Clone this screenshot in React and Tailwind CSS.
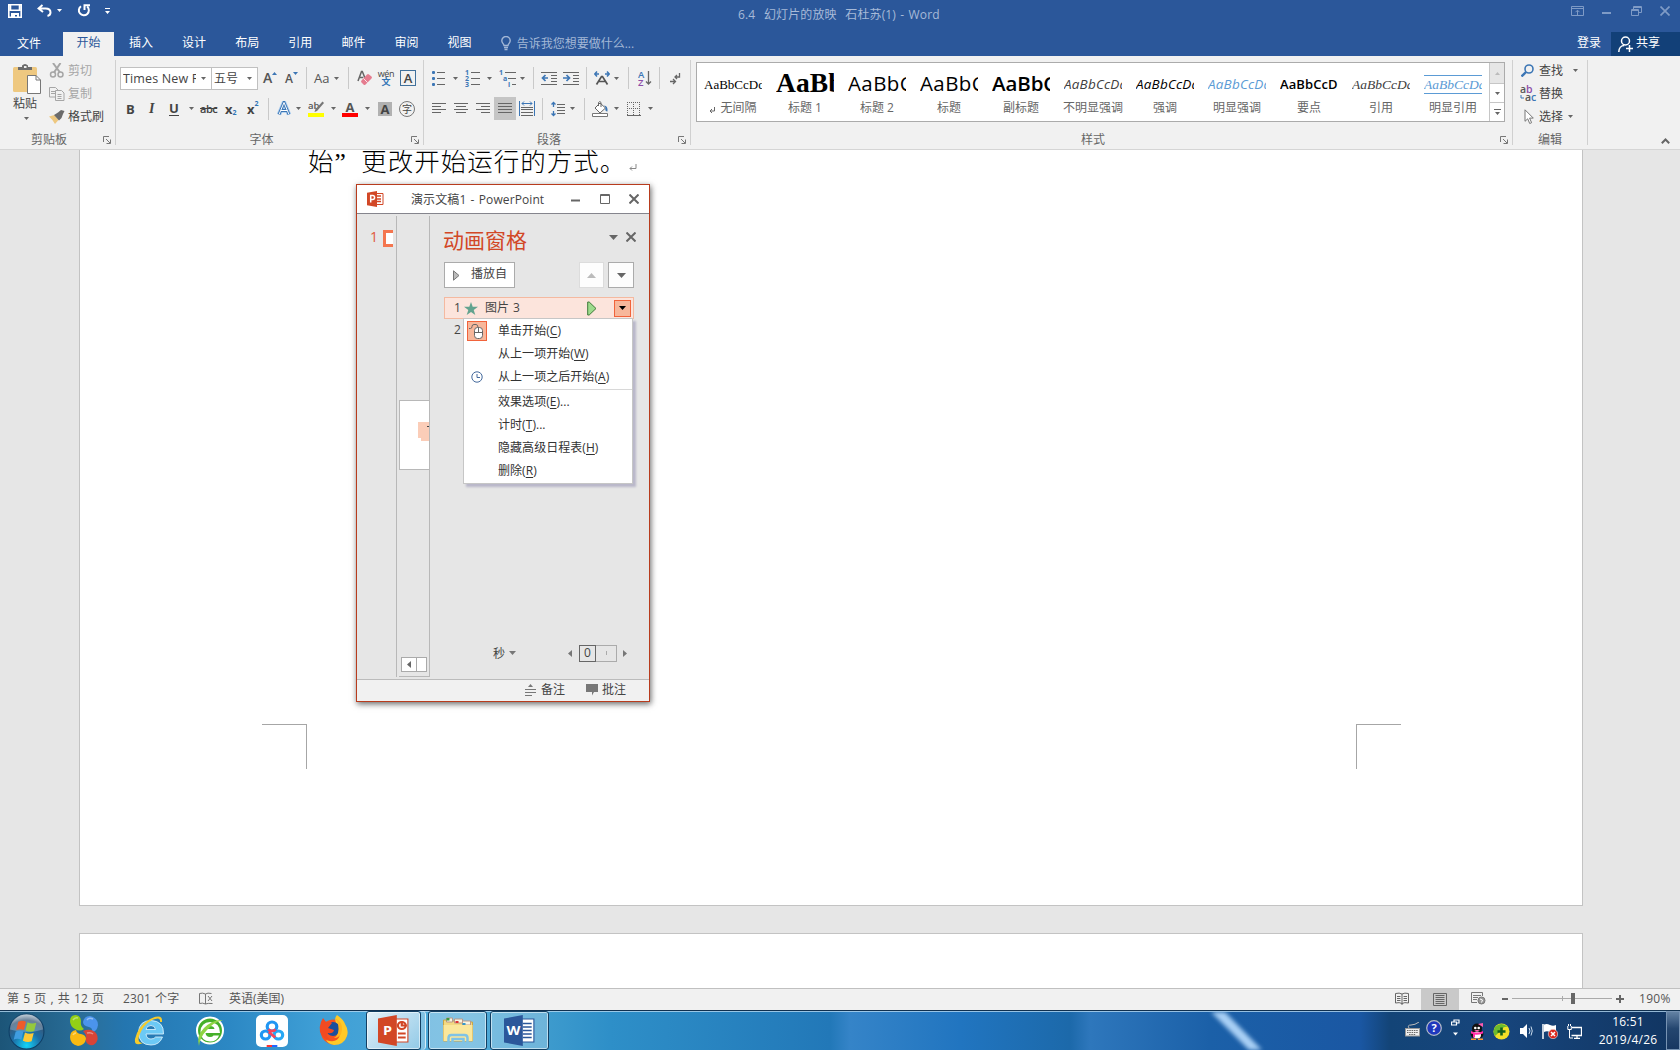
import React from "react";

const Caret = ({ className = "fill-[#666]" }) => (
  <svg width="5" height="3" viewBox="0 0 5 3" className={className}><path d="M0 0h5L2.5 3z" /></svg>
);
const CaretCell = ({ className }) => (
  <span className={"flex shrink-0 items-center " + className}><Caret /></span>
);
const Sep = ({ className }) => (
  <span className={"flex shrink-0 " + className}><i className="h-[22px] w-px bg-[#c9c9c9]" /></span>
);
const Cell = ({ className = "", children }) => (
  <span className={"flex shrink-0 items-center " + className}>{children}</span>
);
const Launcher = () => (
  <svg width="8" height="8" viewBox="0 0 8 8" fill="none" stroke="#777"><path d="M.5 6V.5H6M3 3l4 4M7.5 3.5v4h-4" /></svg>
);

const Group = ({ className, label, labelClass = "", launcher, children }) => (
  <div className={"flex h-full shrink-0 pt-1 pb-[4px] " + className}>
    <div className="flex min-w-0 flex-1 flex-col">
      <div className="h-[70px]">{children}</div>
      <div className="flex h-[17px] items-center">
        <span className={"flex-1 pt-[6px] text-center text-[#666] " + labelClass}>{label}</span>
        {launcher && <span className="mt-[7px] mr-[4px]"><Launcher /></span>}
      </div>
    </div>
    <div className="w-px bg-[#d0d0d0]" />
  </div>
);

/* ---------- title bar and tabs ---------- */

function TitleBar() {
  return (
    <div className="flex h-8 shrink-0 text-white">
      <div className="flex w-[130px] items-start pt-1 pl-2">
        <svg width="14" height="14" viewBox="0 0 14 14" className="mr-[15px] shrink-0"><path fill="none" stroke="#fff" strokeWidth="1.6" d="M.8.8h12.4v12.4H.8zM2.5 1v5.3h9V1" /><path fill="#fff" d="M3 9h8v5H9v-3H7v3H3z" /></svg>
        <svg width="15" height="13" viewBox="0 0 15 13" className="shrink-0"><path fill="none" stroke="#fff" strokeWidth="2" d="M5.5 1 1.5 4.5 6 8M2 4.5h6.5c3 0 5 1.6 5 4 0 1.6-1 3-3 3.5" /></svg>
        <span className="mt-[5px] ml-[5px]"><Caret className="fill-white" /></span>
        <svg width="14" height="13" viewBox="0 0 14 13" className="ml-[15px] shrink-0"><path fill="none" stroke="#fff" strokeWidth="2" d="M4 2.2a5 5 0 1 0 6.2.4M7.5 6V1.2H13" /></svg>
        <svg width="5" height="7" viewBox="0 0 5 7" className="mt-[4px] ml-[14px] shrink-0" fill="#fff"><path d="M0 0h5v1H0zM0 3h5L2.5 6z" /></svg>
      </div>
      <div className="flex-1 pt-[6px] pl-[608px] leading-[18px] tracking-[.12px] [word-spacing:1.1px] whitespace-pre text-[#a7bad8]">6.4  幻灯片的放映  石杜苏(1) - Word</div>
      <div className="flex w-[109px] items-start pt-1.5 text-[#7f9bc6]">
        <svg width="13" height="10" viewBox="0 0 13 10" className="mr-[18px]" fill="none" stroke="currentColor"><path d="M.5.5h12v9H.5zM.5 2.5h12M6.5 9V4.5M4.5 6.2l2-2 2 2" /></svg>
        <svg width="10" height="10" viewBox="0 0 10 10" className="mr-[19px]" fill="currentColor"><path d="M0 6h9v2H0z" /></svg>
        <svg width="11" height="10" viewBox="0 0 11 10" className="mr-[18px]" fill="none" stroke="currentColor"><path d="M.5 3.5h7v6h-7zM.5 4.5h7M2.5 3.500V.5h8v6h-3M2.500 1.500h8" /></svg>
        <svg width="10" height="10" viewBox="0 0 10 10" fill="none" stroke="currentColor" strokeWidth="1.7"><path d="m.5.5 9 9m0-9-9 9" /></svg>
      </div>
    </div>
  );
}

function Tabs() {
  const tabs = ["插入", "设计", "布局", "引用", "邮件", "审阅", "视图"];
  return (
    <div className="flex h-6 shrink-0 text-white">
      <div className="w-[63px] pl-[17px] leading-[23px]">文件</div>
      <div className="w-[51px] bg-[#f1f1f1] text-center leading-[22px] text-[#2b579a]">开始</div>
      <div className="flex pl-[15px] leading-[22px]">
        {tabs.map((t) => <span key={t} className="w-[53.100px]">{t}</span>)}
      </div>
      <div className="flex flex-1 text-[#a3b7d6]">
        <svg width="10" height="15" viewBox="0 0 10 15" className="mt-1 mr-[6px]" fill="none" stroke="currentColor" strokeWidth="1.400"><path d="M3 9.500C3 8 .8 7 .8 4.700A4.100 4.100 0 0 1 9.200 4.700C9.200 7 7 8 7 9.500zM3 11.500h4M3.500 13.500h3" /></svg>
        <span className="leading-[24px]">告诉我您想要做什么...</span>
      </div>
      <span className="w-[34px] leading-[22px]">登录</span>
      <div className="flex w-[69px] bg-[#124078] pl-[7px]">
        <svg width="16" height="17" viewBox="0 0 16 17" className="mt-[4px] mr-[2px]" fill="none" stroke="#fff" strokeWidth="1.500"><circle cx="7.500" cy="5" r="4" /><path d="M.8 16c0-4 2.500-6.500 5.500-6.500M8 12.500h7M11.500 9v7" /></svg>
        <span className="leading-[22px]">共享</span>
      </div>
    </div>
  );
}

/* ---------- ribbon ---------- */

function Clipboard() {
  return (
    <Group className="w-[116px]" label="剪贴板" labelClass="-ml-[5px]" launcher>
      <div className="flex">
        <div className="w-[49px] pt-[4px] pl-[13px]">
          <svg width="29" height="30" viewBox="0 0 29 30"><rect y="3" width="24" height="25" rx="1.500" fill="#eec880" /><path d="M5 6V3h4V1.500Q12 -1.500 15 1.500V3h4v3z" fill="#6b6b6b" /><rect x="11" y="2" width="2.500" height="2" fill="#eee" /><path d="M14.500 11.500h8.500l4.500 4.500v13.500h-13z" fill="#fff" stroke="#777" /><path d="M23 11.500v4.500h4.500" fill="none" stroke="#777" /></svg>
          <div className="mt-[2px] leading-4 text-[#444]">粘贴</div>
          <div className="mt-[5px] flex pl-[11px]"><Caret /></div>
        </div>
        <div className="-mt-px flex flex-col text-[#a6a6a6]">
          <div className="flex h-[23px] items-center">
            <svg width="16" height="15" viewBox="0 0 16 15" className="mr-[3px]" fill="none" stroke="#a6a6a6" strokeWidth="1.500"><path d="M4 0l7 9.500M11.500 0 5 9.500" strokeWidth="2" /><circle cx="4" cy="11.500" r="2.500" /><circle cx="11.500" cy="11.500" r="2.500" /></svg>剪切</div>
          <div className="flex h-[23px] items-center">
            <svg width="16" height="14" viewBox="0 0 16 14" className="mr-[3px]" fill="#f1f1f1" stroke="#a6a6a6"><path d="M.5.500h6l2.500 2.500v7h-8.500zM2 4.500h4M2 6.500h4" /><path d="M6.500 3.500h6l2.500 2.500v7.500h-8.500zM8.500 7.500h4M8.500 9.500h4M8.500 11.500h4" /></svg>复制</div>
          <div className="flex h-[23px] items-center text-[#444]">
            <svg width="16" height="14" viewBox="0 0 16 14" className="mr-[3px]"><path d="M0 6.500 5.500 5l4 5-3.500 4Q3.500 9.500 0 6.500z" fill="#eec880" /><path d="m5 5 4-2.500L12 0l3.500 1-1.500 3-1.500 4-2.500 2.500z" fill="#6b6b6b" /></svg>格式刷</div>
        </div>
      </div>
    </Group>
  );
}

const Combo = ({ className, children }) => (
  <div className={"flex h-[23px] shrink-0 items-center justify-between border border-[#c0c0c0] bg-white pr-[5px] text-[#444] " + className}>{children}<Caret /></div>
);

function FontGroup() {
  return (
    <Group className="w-[308px] pl-[4px]" label="字体" labelClass="-ml-[8px]" launcher>
      <div className="flex h-[36px] items-center text-[#555]">
        <Combo className="w-[92px] pl-[2px]"><span className="w-[73px] overflow-hidden pt-px text-[12.500px] tracking-[.15px] whitespace-nowrap">Times New Roman</span></Combo>
        <Combo className="-ml-px w-[47px] pl-[2px]"><span className="pt-px">五号</span></Combo>
        <Cell className="ml-[5px] w-[22px]"><b className="text-[14px] font-semibold">A</b><svg width="5" height="3" viewBox="0 0 5 3" className="mb-[10px]"><path fill="#3c76b5" d="M0 3h5L2.500 0z" /></svg></Cell>
        <Cell className="w-[21px] pt-[2px]"><b className="text-[12px] font-semibold">A</b><svg width="5" height="3" viewBox="0 0 5 3" className="mb-[11px]"><path fill="#3c76b5" d="M0 0h5L2.500 3z" /></svg></Cell>
        <Sep className="w-[8px]" />
        <Cell className="w-[20px] text-[13px]">Aa</Cell>
        <CaretCell className="w-[14px]" />
        <Sep className="w-[9px]" />
        <Cell className="w-[22px]"><svg width="16" height="16" viewBox="0 0 16 16"><path d="m1 11 3.500-9.500h.8L8 8M2.300 7.500h4" stroke="#666" strokeWidth="1.500" fill="none" /><path d="M4.500 10.500 10 4.500q1-1 2 0l2.500 2q1 1 0 2l-6 6q-1 1-2 0l-2-2q-1-1 0-2z" fill="#e57c8f" /><path d="m6.500 8.500 4 4" stroke="#fff" strokeWidth=".8" /></svg></Cell>
        <Cell className="w-[21px]"><span className="-ml-px flex w-[16px] flex-col items-center"><span className="text-[9px] leading-[7px] tracking-[-.3px] text-[#444]">wén</span><span className="text-[9px] leading-[10px] font-bold text-[#2f74b5]">文</span></span></Cell>
        <span className="flex size-[16px] items-center justify-center border border-[#41719c] text-[13px] font-semibold text-[#444]">A</span>
      </div>
      <div className="flex h-[25px] items-center text-[#444]">
        <Cell className="ml-[6px] w-[22px] text-[13px] font-bold">B</Cell>
        <Cell className="w-[21px] pl-[1px] text-[14px] font-bold italic"><span className="font-['Liberation_Serif']">I</span></Cell>
        <Cell className="w-[20px] text-[13px]"><b className="border-b border-[#444] leading-[13px]">U</b></Cell>
        <CaretCell className="w-[11px]" />
        <Cell className="w-[25px] text-[11px] font-semibold line-through tracking-[-.5px]">abc</Cell>
        <Cell className="w-[22px] text-[13px] font-bold">x<span className="mt-[8px] text-[7px] text-[#2f74b5]">2</span></Cell>
        <Cell className="w-[21px] text-[13px] font-bold">x<span className="mb-[9px] text-[7px] text-[#2f74b5]">2</span></Cell>
        <Sep className="w-[9px]" />
        <Cell className="w-[19px]"><svg width="15" height="15" viewBox="0 0 15 15"><path d="M2 13.500 7 1.500l5 12M4 9.500h6" stroke="#a8cbee" strokeWidth="4.500" fill="none" /><path d="M2 13.500 7 1.500l5 12M4 9.500h6" stroke="#3c76b5" strokeWidth="2.800" fill="none" /><path d="M2 13.500 7 1.500l5 12M4 9.500h6" stroke="#fff" strokeWidth="1" fill="none" /></svg></Cell>
        <CaretCell className="w-[12px]" />
        <Cell className="w-[23px]"><svg width="17" height="16" viewBox="0 0 17 16"><text x="0" y="8" fontSize="9.500" fontWeight="600" fontFamily="Open Sans, sans-serif" fill="#555">ab</text><path d="m16 2-7 8-2.500 1 .8-2.500L14.500.500z" fill="#777" /><path fill="#ff0" d="M0 12h16v4H0z" /></svg></Cell>
        <CaretCell className="w-[11px]" />
        <Cell className="w-[23px]"><span className="flex w-4 flex-col items-center border-b-4 border-[red] text-[13px] leading-[12px] font-bold text-[#555]">A</span></Cell>
        <CaretCell className="w-[13px]" />
        <Cell className="w-[21px]"><span className="flex h-[14px] w-[14px] items-center justify-center bg-[#b1b1b1] text-[13px] font-bold">A</span></Cell>
        <span className="flex size-[16px] items-center justify-center rounded-full border border-[#777] text-[10px] leading-none">字</span>
      </div>
    </Group>
  );
}

const Lines = ({ d, w = 14 }) => (
  <svg width={w} height="15" viewBox={`0 0 ${w} 15`} stroke="#666" fill="none"><path d={d} /></svg>
);

function Paragraph() {
  return (
    <Group className="w-[267px] pl-[8px]" label="段落" labelClass="-ml-[12px]" launcher>
      <div className="flex h-[36px] items-center">
        <Cell className="w-[21px]"><svg width="14" height="16" viewBox="0 0 14 16"><path d="M5 2.500h8M5 8.500h8M5 14.500h8" stroke="#666" /><g fill="#3c76b5"><rect y="1" width="3" height="3" rx="1" /><rect y="7" width="3" height="3" rx="1" /><rect y="13" width="3" height="3" rx="1" /></g></svg></Cell>
        <CaretCell className="w-[12px]" />
        <Cell className="w-[22px]"><svg width="16" height="18" viewBox="0 0 16 18"><path d="M6 3.500h9M6 9.500h9M6 15.500h9" stroke="#666" /><g fill="#3c76b5" fontSize="7" fontWeight="bold" fontFamily="Open Sans, sans-serif"><text y="5.500">1</text><text y="11.500">2</text><text y="17.500">3</text></g></svg></Cell>
        <CaretCell className="w-[12px]" />
        <Cell className="w-[21px]"><svg width="17" height="18" viewBox="0 0 17 18"><path d="M6 3.500h11M9 9.500h8M13 15.500h4" stroke="#666" /><g fill="#3c76b5" fontSize="7" fontWeight="bold" fontFamily="Open Sans, sans-serif"><text y="5.500">1</text><text x="4" y="11.500">a</text><text x="9" y="17.500">i</text></g></svg></Cell>
        <CaretCell className="w-[13px]" />
        <Sep className="w-[8px]" />
        <Cell className="w-[22px]"><svg width="16" height="14" viewBox="0 0 16 14"><path d="M0 1.500h16M10 4.500h6M10 7.500h6M10 10.500h6M0 13.500h16" stroke="#666" /><path d="M7 7H2M4.500 4 1.500 7l3 3" stroke="#3c76b5" strokeWidth="1.700" fill="none" /></svg></Cell>
        <Cell className="w-[23px]"><svg width="16" height="14" viewBox="0 0 16 14"><path d="M0 1.500h16M10 4.500h6M10 7.500h6M10 10.500h6M0 13.500h16" stroke="#666" /><path d="M0 7h5.500M3.500 4l3 3-3 3" stroke="#3c76b5" strokeWidth="1.700" fill="none" /></svg></Cell>
        <Sep className="w-[8px]" />
        <Cell className="w-[20px]"><svg width="16" height="14" viewBox="0 0 16 14"><path d="m2.500 13.500 5-8h1l5 8M4.500 10.500h7" stroke="#555" strokeWidth="1.700" fill="none" /><path d="M3 .5.800 3 3 5.500M1 3h4M13 .5 15.200 3 13 5.500M15 3h-4" stroke="#3c76b5" strokeWidth="1.500" fill="none" /></svg></Cell>
        <CaretCell className="w-[14px]" />
        <Sep className="w-[10px]" />
        <Cell className="w-[21px]"><svg width="15" height="17" viewBox="0 0 15 17"><g fontSize="9.500" fontWeight="600" fontFamily="Open Sans, sans-serif"><text y="8" fill="#3c76b5">A</text><text y="16" fill="#8c4ea8">Z</text></g><path d="M10.500 1v13M8 11.500l2.500 2.500 2.500-2.500" stroke="#666" strokeWidth="1.300" fill="none" /></svg></Cell>
        <Sep className="w-[11px]" />
        <svg width="11" height="13" viewBox="0 0 11 13" fill="none" stroke="#666" strokeWidth="1.300"><path d="M9.500 1v4H5M7 3 5 5l2 2M0 9.500h5M3 7l2.500 2.500L3 12" /></svg>
      </div>
      <div className="flex h-[25px] items-center">
        <Cell className="w-[22px]"><Lines d="M0 2.500h14M0 5.500h9M0 8.500h14M0 11.500h9" /></Cell>
        <Cell className="w-[22px]"><Lines d="M0 2.500h14M2 5.500h10M0 8.500h14M2 11.500h10" /></Cell>
        <Cell className="w-[18px]"><Lines d="M0 2.500h14M5 5.500h9M0 8.500h14M5 11.500h9" /></Cell>
        <Cell className="h-[23px] w-[22px] justify-center bg-[#c5c5c5]"><Lines d="M0 2.500h14M0 5.500h14M0 8.500h14M0 11.500h14" /></Cell>
        <Cell className="w-[26px] pl-[3px]"><svg width="16" height="15" viewBox="0 0 16 15" fill="none"><path d="M2 6.500h12M2 8.500h12M2 11.500h12M2 14.500h12" stroke="#666" /><path d="M.5 0v15M15.500 0v15M3 2.500h10M5 .500 3 2.500l2 2M11 .500l2 2-2 2" stroke="#3c76b5" /></svg></Cell>
        <Sep className="w-[9px]" />
        <Cell className="w-[19px]"><svg width="15" height="16" viewBox="0 0 15 16" fill="none"><path d="M6 3.500h8M6 6.500h8M6 9.500h8M6 12.500h8" stroke="#666" /><path d="M2.500 1v5M.500 3.500l2-2 2 2M2.500 10v5M.500 12.500l2 2 2-2" stroke="#3c76b5" strokeWidth="1.300" /></svg></Cell>
        <CaretCell className="w-[14px]" />
        <Sep className="w-[8px]" />
        <Cell className="w-[22px]"><svg width="17" height="16" viewBox="0 0 17 16"><path d="m3 7 5-5 5.500 5-5.500 5zM6.500 5V1.500q1.500-2 2.500 0V6" fill="#fff" stroke="#666" /><path d="M12 4.500q4 0 3.500 6-3 0-2-4z" fill="#3c76b5" /><path d="M.500 12.500h15v3H.500z" fill="#fff" stroke="#777" /></svg></Cell>
        <CaretCell className="w-[13px]" />
        <Cell className="w-[21px]"><svg width="14" height="14" viewBox="0 0 14 14" fill="none" stroke="#666"><path strokeDasharray="1 1" d="M.5 0v13M6.500 0v13M12.500 0v13M0 .500h13M0 6.500h13" /><path d="M0 13.500h14" /></svg></Cell>
        <CaretCell className="w-[5px]" />
      </div>
    </Group>
  );
}

const STYLES = [
  ["无间隔", "AaBbCcDd", "font-['Liberation_Serif'] text-[13px] text-black"],
  ["标题 1", "AaBb", "font-['Liberation_Serif'] text-[27.5px] tracking-[.1px] font-bold text-black"],
  ["标题 2", "AaBbC", "text-[20.5px] tracking-[.4px] text-black"],
  ["标题", "AaBbC", "text-[20.5px] tracking-[.4px] text-black"],
  ["副标题", "AaBbC", "text-[20.5px] tracking-[-.1px] font-semibold text-black"],
  ["不明显强调", "AaBbCcDd", "text-[13.5px] tracking-[.2px] italic text-[#404040]"],
  ["强调", "AaBbCcDd", "text-[13.5px] tracking-[.2px] italic text-black"],
  ["明显强调", "AaBbCcDd", "text-[13.5px] tracking-[.2px] italic text-[#5b9bd5]"],
  ["要点", "AaBbCcDd", "text-[13px] tracking-[.1px] font-semibold text-black"],
  ["引用", "AaBbCcDd", "font-['Liberation_Serif'] text-[13.500px] italic text-[#404040]"],
  ["明显引用", "AaBbCcDd", "font-['Liberation_Serif'] text-[13.500px] italic text-[#5b9bd5]"],
];

function Styles() {
  return (
    <Group className="w-[822px] pl-[5px]" label="样式" labelClass="-ml-[10px]" launcher>
      <div className="mt-[2px] flex h-[60px] w-[809px] border border-[#ababab] bg-white">
        {STYLES.map(([name, sample, cls], i) => (
          <div key={name} className="flex w-[72px] shrink-0 flex-col px-[7px]">
            <div className={"flex items-center overflow-hidden " + (i === 10 ? "mt-[12px] mb-[8px] h-[19px] border-y border-[#5b9bd5]" : "mt-[8px] mb-[8px] h-[23px]" + (i === 1 ? "" : i > 1 && i < 5 ? " pt-[2px]" : " pt-[3px]"))}>
              <span className={"block leading-[19px] whitespace-nowrap " + cls}>{sample}</span>
            </div>
            <div className="-mx-[7px] flex items-center justify-center leading-[12px] whitespace-nowrap text-[#666]">
              {i === 0 && <svg width="6" height="6" viewBox="0 0 6 6" className="mt-1 mr-[5px]" fill="none" stroke="#666"><path d="M5.500 0v4H1M3 2 1 4l2 2" /></svg>}
              {name}
            </div>
          </div>
        ))}
        <div className="flex w-[15px] flex-col border-l border-[#c6c6c6]">
          <span className="flex h-[21px] items-center justify-center border-b border-[#c6c6c6] bg-[#e6e6e6]"><svg width="5" height="3" viewBox="0 0 5 3"><path fill="#bbb" d="M0 3h5L2.500 0z" /></svg></span>
          <span className="flex h-[19px] items-center justify-center border-b border-[#c6c6c6]"><Caret /></span>
          <span className="flex flex-1 items-center justify-center"><svg width="7" height="6" viewBox="0 0 7 6" fill="#666"><path d="M0 0h7v1H0zM1 3h5L3.500 6z" /></svg></span>
        </div>
      </div>
    </Group>
  );
}

function Editing() {
  return (
    <Group className="w-[75px] pl-[8px]" label="编辑" labelClass="-ml-[8px]">
      <div className="-mt-px flex h-[23px] items-center text-[#444]">
        <svg width="13" height="13" viewBox="0 0 13 13" className="mr-[5px]" fill="none" stroke="#3c76b5"><circle cx="8" cy="5" r="4" strokeWidth="1.600" /><path d="m5 8-4.500 4.500" strokeWidth="2.400" /></svg>查找<span className="ml-[10px]"><Caret /></span>
      </div>
      <div className="flex h-[23px] items-center text-[#444]">
        <svg width="17" height="17" viewBox="0 0 17 17" className="-ml-px mr-[2px]" fontSize="10.500" fontWeight="600" fontFamily="Open Sans, sans-serif"><text y="8" fill="#555">a<tspan fill="#8c4ea8">b</tspan></text><text x="5" y="16" fill="#555">a<tspan fill="#3c76b5">c</tspan></text><path d="M1 10v3h3" stroke="#3c76b5" fill="none" /></svg>替换
      </div>
      <div className="flex h-[23px] items-center text-[#444]">
        <svg width="10" height="16" viewBox="0 0 10 16" className="mr-[5px] ml-[3px]" fill="#fff" stroke="#777"><path d="M1 .800v11.500l2.700-2.500 2 4.700 1.900-.8-2-4.600h3.700z" /></svg>选择<span className="ml-[5px]"><Caret /></span>
      </div>
    </Group>
  );
}

/* ---------- embedded PowerPoint window ---------- */

const MENU = [
  ["单击开始", "C", ""], ["从上一项开始", "W", ""], ["从上一项之后开始", "A", ""], null,
  ["效果选项", "E", "..."], ["计时", "T", "..."], ["隐藏高级日程表", "H", ""], ["删除", "R", ""],
];

function Menu() {
  return (
    <div className="absolute top-[20px] left-[18px] z-10 h-[166px] w-[170px] border border-[#c6c6c6] bg-white text-[#333] shadow-[3px_3px_2px_rgba(120,115,160,.4)]">
      {MENU.map((m, i) => m ? (
        <div key={i} className="flex h-[23px] items-center whitespace-nowrap">
          <span className="flex w-[34px] shrink-0 pl-[3px]">
            {i === 0 && <svg width="20" height="20" viewBox="0 0 20 20" className="mt-px"><rect x=".5" y=".500" width="19" height="19" fill="#f7b79b" stroke="#f1633b" /><path d="M2 7.500h1.500Q5 7.500 5 5.500t2-2h2q2 0 2 3" stroke="#666" fill="none" /><rect x="7.500" y="6.500" width="8" height="11" rx="3" fill="#fff" stroke="#666" /><path d="M7.500 11.500h8M11.500 6.500v5" stroke="#666" /></svg>}
            {i === 2 && <svg width="12" height="12" viewBox="0 0 12 12" className="ml-[4px]" fill="none" stroke="#44699c"><circle cx="6" cy="6" r="5.200" /><path d="M6 3v3.500h3" /></svg>}
          </span>
          <span className="tracking-[.05px]">{m[0]}(<u className="underline-offset-2">{m[1]}</u>){m[2]}</span>
        </div>
      ) : <div key={i} className="mt-px ml-[34px] h-px bg-[#d8d8d8]" />)}
    </div>
  );
}

function PowerPointWindow() {
  return (
    <div className="mt-[8px] ml-[276px] flex h-[518px] w-[294px] flex-col border border-[#b83b1d] bg-[#e6e6e6] text-[#444] shadow-[1px_2px_6px_rgba(0,0,0,.6)]">
      <div className="flex h-[29px] shrink-0 items-center border-b border-[#85858d] bg-white pl-[10px]">
        <svg width="17" height="16" viewBox="0 0 17 16"><path d="M8 2.500h8v11H8z" fill="#fff" stroke="#d24726" /><path d="M10 5h4M10 8h4M10 10.500h4" stroke="#d24726" strokeWidth="1.500" /><path d="M0 1.700 10 0v16L0 14.300z" fill="#d24726" /><path d="M3.700 11.500v-7h2c2.500 0 2.500 4 0 4h-2" stroke="#fff" strokeWidth="1.500" fill="none" /></svg>
        <span className="ml-[27px] w-[160px] pt-px tracking-[.1px] [word-spacing:1px]">演示文稿1 - PowerPoint</span>
        <svg width="9" height="10" viewBox="0 0 9 10" fill="#666"><path d="M0 5.500h9v2H0z" /></svg>
        <svg width="10" height="10" viewBox="0 0 10 10" className="ml-[20px]" stroke="#666" fill="none"><path d="M.5.500h9v9h-9zM0 1.500h10" /></svg>
        <svg width="10" height="10" viewBox="0 0 10 10" className="ml-[19px]" stroke="#666" strokeWidth="2" fill="none"><path d="m.5.500 9 9m0-9-9 9" /></svg>
      </div>
      <div className="flex h-[465px] shrink-0">
        <div className="mt-[2px] mb-[2px] flex w-[40px] border-r border-[#b8b8b8] pt-[11px] pl-[13px] text-[14px] leading-[20px] text-[#e0583a]">
          <span className="w-[13px]">1</span>
          <span className="mt-[3px] h-[17px] w-[10px] border-y-[3px] border-l-[3px] border-[#f4764f] bg-white" />
        </div>
        <div className="mt-[2px] mb-[2px] flex w-[33px] shrink-0 flex-col items-end border-r border-[#b8b8b8]">
          <div className="mt-[184px] flex h-[70px] w-[30px] items-start justify-end border border-r-0 border-[#b8b8b8] bg-white pt-[21px]">
            <svg width="11" height="19" viewBox="0 0 11 19"><path d="M0 0h11v19H3v-3H0z" fill="#fbcdb8" /><path d="M9 4.500h2" stroke="#444" /></svg>
          </div>
          <div className="mt-auto mr-[2px] mb-[4px] flex h-[15px] w-[26px] border border-[#aaa] bg-white">
            <span className="flex w-[15px] items-center justify-center border-r border-[#aaa]"><svg width="4" height="7" viewBox="0 0 4 7"><path fill="#666" d="M4 0v7L0 3.500z" /></svg></span>
          </div>
          <div className="h-px w-[30px] bg-[#b8b8b8]" />
        </div>
        <div className="flex flex-1 flex-col pl-[14px]">
          <div className="mt-[12px] flex h-[30px] items-center text-[#d24726]">
            <span className="-ml-px w-[166px] pb-px text-[21px] leading-[29px]">动画窗格</span>
            <svg width="9" height="5" viewBox="0 0 9 5" className="mb-[8px]"><path fill="#666" d="M0 0h9L4.500 5z" /></svg>
            <svg width="10" height="10" viewBox="0 0 10 10" className="mb-[8px] ml-[8px]" stroke="#666" strokeWidth="2"><path d="m.5.500 9 9m0-9-9 9" /></svg>
          </div>
          <div className="mt-[6px] flex h-[26px]">
            <div className="flex w-[71px] items-center border border-[#ababab] bg-white pl-[8px]">
              <svg width="7" height="11" viewBox="0 0 7 11"><path d="M.5.800v9.400L6 5.500z" fill="#bbb" stroke="#777" /></svg><span className="mb-[2px] ml-[11px]">播放自</span>
            </div>
            <span className="ml-[64px] flex w-[25px] items-center justify-center border border-[#dcdcdc] bg-[#fdfdfd]"><svg width="9" height="5" viewBox="0 0 9 5"><path fill="#bbb" d="M0 5h9L4.500 0z" /></svg></span>
            <span className="ml-[4px] flex w-[26px] items-center justify-center border border-[#ababab] bg-[#fdfdfd]"><svg width="9" height="5" viewBox="0 0 9 5"><path fill="#666" d="M0 0h9L4.500 5z" /></svg></span>
          </div>
          <div className="relative mt-[9px] flex h-[22px] w-[190px] items-center border border-[#f4b9a0] bg-[#fce4dc]">
            <span className="ml-[9px] w-[10px]">1</span>
            <svg width="14" height="13" viewBox="0 0 14 13"><path fill="#62a38f" d="m7 0 1.700 4.800h5.300L9.700 8l1.600 5L7 10l-4.300 3 1.600-5L0 4.800h5.300z" /></svg>
            <span className="ml-[7px] w-[102px] [word-spacing:1px]">图片 3</span>
            <svg width="10" height="15" viewBox="0 0 10 15"><path d="M.7 1v13h1.500L9 7.500 2.200 1z" fill="#9ddb8c" stroke="#3f7a3a" /></svg>
            <span className="ml-[17px] flex size-[17px] items-center justify-center border border-[#f1633b] bg-[#f7b79b]"><svg width="7" height="4" viewBox="0 0 7 4"><path d="M0 0h7L3.500 4z" /></svg></span>
            <Menu />
          </div>
          <span className="mt-px ml-[10px] leading-[20px]">2</span>
          <div className="mt-auto mb-[17px] flex h-[18px] items-center">
            <span className="ml-[49px] pt-px">秒</span>
            <svg width="7" height="4" viewBox="0 0 7 4" className="ml-[4px]"><path fill="#777" d="M0 0h7L3.500 4z" /></svg>
            <svg width="4" height="7" viewBox="0 0 4 7" className="ml-[52px]"><path fill="#777" d="M4 0v7L0 3.500z" /></svg>
            <span className="ml-[7px] flex h-[17px] w-[17px] items-center justify-center border border-[#666]">0</span>
            <span className="flex h-[17px] w-[21px] items-center justify-center border border-l-0 border-[#ababab]"><i className="h-[4px] w-px bg-[#aaa]" /></span>
            <svg width="4" height="7" viewBox="0 0 4 7" className="ml-[6px]"><path fill="#777" d="M0 0v7l4-3.500z" /></svg>
          </div>
        </div>
      </div>
      <div className="flex flex-1 items-center border-t border-[#bbb] bg-[#f1f1f1] pb-px pl-[168px]">
        <svg width="11" height="12" viewBox="0 0 11 12"><path d="M0 5.500h11M0 8.500h11M0 11.500h7" stroke="#777" /><path d="M3 3h5L5.500 0z" fill="#777" /></svg>
        <span className="ml-[5px]">备注</span>
        <svg width="12" height="12" viewBox="0 0 12 12" className="ml-[21px]"><path fill="#777" d="M0 0h12v8H8l-2 3.500V8H0z" /></svg>
        <span className="ml-[4px]">批注</span>
      </div>
    </div>
  );
}

function Document() {
  return (
    <div className="flex h-[838px] shrink-0 flex-col overflow-hidden bg-[#e6e6e6] pr-[97px] pl-[79px]">
      <div className="flex h-[756px] shrink-0 flex-col border border-t-0 border-[#c3c3c3] bg-white">
        <div className="flex h-[26px] items-center pl-[228px] text-[25.500px] leading-[26px] font-light text-black">
          <span className="-mt-[4px] w-[26.600px]">始</span>
          <span className="w-[26.600px] font-['Liberation_Serif']">”</span>
          <span className="-mt-[4px] tracking-[1px]">更改开始运行的方式。</span>
          <svg width="8" height="7" viewBox="0 0 8 7" className="mt-[8px] ml-[3px]" fill="none" stroke="#888"><path d="M7 0v4.500H1M3 2.500l-2 2 2 2" /></svg>
        </div>
        <PowerPointWindow />
        <div className="mt-[22px] flex justify-between pr-[181px] pl-[182px]">
          <span className="size-[45px] border-t border-r border-[#a6a6a6]" />
          <span className="size-[45px] border-t border-l border-[#a6a6a6]" />
        </div>
      </div>
      <div className="mt-[27px] h-[60px] shrink-0 border border-[#c3c3c3] bg-white" />
    </div>
  );
}

/* ---------- status bar ---------- */

function StatusBar() {
  return (
    <div className="flex h-[22px] shrink-0 items-center border-t border-[#c0c0c0] bg-[#f1f1f1] pb-[2px] pl-[7px] text-[#555]">
      <span className="w-[116px] [word-spacing:1.100px] whitespace-nowrap">第 5 页 , 共 12 页</span>
      <span className="w-[76px] [word-spacing:1px] tracking-[.1px]">2301 个字</span>
      <svg width="15" height="13" viewBox="0 0 15 13" className="mr-[15px]" fill="none" stroke="#777"><path d="M.5 1.500q3-1 6 .500v10q-3-1.500-6-.500zM6.500 2q2-1.500 6-.500M6.500 12q2-1 7-.500M9 4l4 5M13 4 9 9" /></svg>
      <span className="flex-1">英语(美国)</span>
      <svg width="14" height="13" viewBox="0 0 14 13" fill="none" stroke="#666"><path d="M.5 1.500q4-1 6.500.500 2.500-1.500 6.500-.500v9.500q-4-1-6.500.500-2.500-1.500-6.500-.500zM7 2v11M2 4.500h3.500M2 6.500h3.500M2 8.500h3.500M8.500 4.500H12M8.500 6.500H12M8.500 8.500H12" /></svg>
      <span className="-mb-[2px] ml-[12px] flex h-[21px] w-[38px] items-center justify-center bg-[#c9c9c9] pb-px"><svg width="14" height="13" viewBox="0 0 14 13" fill="none" stroke="#666"><path d="M.5.500h13v12H.500zM2.500 2.500h9M2.500 4.500h9M2.500 6.500h9M2.500 8.500h9M2.500 10.500h9" /></svg></span>
      <svg width="15" height="13" viewBox="0 0 15 13" className="ml-[12px]" fill="none" stroke="#777"><path d="M6 10.500H.500V.500h11V4M2 3.500h8M2 5.500h5M2 7.500h4" /><circle cx="10.500" cy="8.500" r="3.500" fill="#999" /><path d="m9 7 2.500 1-1 2.500" stroke="#fff" /></svg>
      <i className="ml-[16px] h-[2px] w-[6px] bg-[#666]" />
      <svg width="100" height="11" viewBox="0 0 100 11" className="ml-[4px]"><path d="M0 5.500h100M50.500 3v5" stroke="#aaa" /><path fill="#666" d="M59 0h4v11h-4z" /></svg>
      <svg width="8" height="8" viewBox="0 0 8 8" className="ml-[4px]" fill="#666"><path d="M3 0h2v3h3v2H5v3H3V5H0V3h3z" /></svg>
      <span className="ml-[15px] w-[41px] tracking-[.3px]">190%</span>
    </div>
  );
}

/* ---------- taskbar ---------- */

function TaskButton({ className, children }) {
  return <div className={"flex h-[39px] shrink-0 items-center justify-center rounded-[3px] border border-[#123f63] shadow-[inset_0_0_0_1px_rgba(255,255,255,.55)] " + className}>{children}</div>;
}

const OfficeIcon = ({ color, letter, children }) => (
  <svg width="31" height="31" viewBox="0 0 28 31" preserveAspectRatio="none" className="mb-px"><path d="M15 4h12v23H15z" fill="#fff" stroke={color} />{children}<path d="M0 3.500 17 0v31L0 27.500z" fill={color} /><text x="8.500" y="20" textAnchor="middle" fontSize="13" fontWeight="bold" fill="#fff" fontFamily="Open Sans, sans-serif">{letter}</text></svg>
);

function Taskbar() {
  return (
    <div className="flex h-[40px] shrink-0 items-center border-t border-[#10304f] bg-[linear-gradient(90deg,#1c5578_0px,#2a709c_90px,#2476b0_125px,#2c88c4_230px,#3f9fd6_320px,#50abd8_470px,#3f9cce_540px,#2e8fc8_610px,#2278b8_830px,#3584c8_850px,#2175c0_960px,#1c69aa_1070px,#2e77bc_1090px,#1b60a8_1210px,#1a57a3_1360px,#134477_1390px,#17457c_1500px,#113561_1680px)] text-white shadow-[inset_0_1px_0_rgba(180,215,240,.8)]">
      <svg width="37" height="37" viewBox="0 0 36 36" className="mt-[1px] ml-[8px] shrink-0"><defs><radialGradient id="orb" cx=".5" cy=".9" r=".9"><stop offset="0" stopColor="#12d4f8" /><stop offset=".45" stopColor="#1c6ea6" /><stop offset=".8" stopColor="#395776" /><stop offset="1" stopColor="#b6c5d2" /></radialGradient></defs><circle cx="18" cy="18" r="17" fill="url(#orb)" stroke="#0e3f66" /><path d="M2 16a16 15 0 0 1 32 0q-16 5-32 0z" fill="#fff" opacity=".25" /><path d="M10 8.500q4-2 7.500 0l-2 8q-4-1.500-7.500 0z" fill="#ee5b2a" /><path d="M19 9q4 2 8.500.500l-2 8q-4 1.500-8.500-.500z" fill="#95c93d" /><path d="M7.500 18q4-1.500 7.500 0l-2 8q-4-2-7.500 0z" fill="#3f9de0" /><path d="M16.500 19q4 2 8.500.500l-2 8q-4 1.500-8.500-.500z" fill="#fcc836" /></svg>
      <svg width="30" height="31" viewBox="0 0 30 31" className="ml-[24px] shrink-0"><path d="M1 6Q1 0 7 0q5 1 5 6-1 5 3 8-4 3-9 0-5-3-5-8z" fill="#93cf16" /><path d="M14 7q1-6 7-6 8 2 8 9-1 7-6 7 1-4-3-5-6-1-6-5z" fill="#4b94ec" /><path d="M1 22q0-6 6-7 1 4 5 4 5 1 5 5-1 6-8 7-8-2-8-9z" fill="#f9b912" /><path d="M14 16q7-3 12 1 4 4 2 9-2 5-7 4-5-2-4-6 1-4-3-8z" fill="#d94436" /><path d="M4 5q2-3 5-2M18 5q2-3 6-1M4 20q1-2 3-2M18 18q4-1 6 1" stroke="#fff" strokeWidth="1.500" opacity=".4" fill="none" /></svg>
      <svg width="32" height="33" viewBox="0 0 32 33" className="ml-[34px] shrink-0"><path d="M30.500 20H13q.5 5 5 5 3.500 0 4.500-2h7q-3 8-11.500 8Q6 31 5.500 18.500 6 6.500 18 6.500 31 7 30.500 20zM13 15.500h9.500q-.5-4-4.500-4-4.500 0-5 4z" fillRule="evenodd" fill="#6cc9f5" stroke="#e3f6ff" strokeWidth=".8" /><path d="M29 8Q30-1 17 5 5 12 2 25q-1 8 8 4-6 0-4-7Q10 11 19 6q9-4 8 2z" fill="#f6cb2c" /></svg>
      <svg width="30" height="32" viewBox="0 0 30 32" className="ml-[30px] shrink-0"><circle cx="15" cy="15.500" r="13" fill="#45b02a" stroke="#fff" strokeWidth="2" /><path d="M25 18H10.500q.5 4 4.500 4 2.500 0 3.500-1.500H24q-2 6-9 6-9-.5-9.500-10Q6 7.500 15 7q10 .5 10 11zM10.500 14h9q-.5-3-4.500-3t-4.500 3z" fillRule="evenodd" fill="#fff" /><path d="M28 5Q18 4 9 13 1 21 4 31q1-9 8-16 7-8 16-10z" fill="#8fd444" /></svg>
      <svg width="32" height="32" viewBox="0 0 30 32" preserveAspectRatio="none" className="ml-[31px] shrink-0"><rect width="30" height="32" rx="5" fill="#fff" /><g fill="none" strokeWidth="3"><circle cx="9" cy="20" r="4" stroke="#2196f3" /><circle cx="21" cy="20" r="4" stroke="#27a8f5" /><circle cx="15" cy="11.500" r="4.500" stroke="#2196f3" /><path d="M11.500 14.500q3.500 3 7 0M12 17l6 5.500" stroke="#f6435a" strokeWidth="2.500" /></g><path d="M10 30h5v2h-5z" fill="#f33" /><path d="M15 30h5v2h-5z" fill="#26f" /></svg>
      <svg width="30" height="31" viewBox="0 0 30 31" className="ml-[31px] shrink-0"><circle cx="14.500" cy="17" r="12.500" fill="#f7531f" /><path d="M18 0q7 5 8 9 4 6 2 12-3 9-13 9-6-1-8-5 11 4 14-5 2-8-4-12Q15 3 18 0z" fill="#ffc928" /><circle cx="14" cy="14" r="7" fill="#1b4f9c" /><path d="M2 7q1-2 2-4l3 4q4-1 6 1l-4 5 6 2q-1 4-6 3-3 3 3 7-9-1-11-8Q0 12 2 7z" fill="#f24a22" /><path d="M16 3q8 4 7 12-1 8-8 8 3-2 4-5 2-8-3-15z" fill="#ffb61e" /></svg>
      <TaskButton className="ml-[17px] w-[55px] bg-[linear-gradient(135deg,rgba(255,255,255,.85),rgba(255,255,255,.4))]">
        <OfficeIcon color="#d24726" letter="P"><circle cx="21.500" cy="10.500" r="3.500" fill="#fff" stroke="#d24726" strokeWidth="2" /><path d="M21.500 6v4.500H26M18 18.500h7M18 22.500h7" stroke="#d24726" strokeWidth="2" fill="none" /></OfficeIcon>
      </TaskButton>
      <span className="h-[39px] w-[5px] rounded-r border-r border-white/70 bg-white/30" />
      <TaskButton className="ml-[2px] w-[59px] bg-white/30">
        <svg width="32" height="28" viewBox="0 0 31 28"><path d="M1 3h9l2 2h18v19H1z" fill="#f3d981" stroke="#c9a546" /><path d="M4 1h6v4H4z" fill="#f8f4e0" stroke="#b98" /><path d="M4 1h3v2.500H4z" fill="#3a9a40" /><path d="M12 2h8v4h-8zM20 4h8v4h-8z" fill="#f8f4e0" stroke="#b98" /><path d="M13 4h3v2h-3z" fill="#d33" /><path d="M20 6h3v2h-3z" fill="#39c" /><path d="M1 8h29v16H1z" fill="#fae79c" /><path d="M6 27v-6q0-3 3-3h13q3 0 3 3v6M10 27v-5h11v5" fill="none" stroke="#7fc3e6" strokeWidth="2.500" /></svg>
      </TaskButton>
      <TaskButton className="ml-[3px] w-[59px] bg-white/25">
        <OfficeIcon color="#2b579a" letter="W"><path d="M17 8.500h8M17 12h8M17 15.500h8M17 19h8M17 22.500h8" stroke="#2b579a" strokeWidth="1.500" /></OfficeIcon>
      </TaskButton>
      <div className="h-full min-w-0 flex-1 pl-[657px]"><svg width="62" height="39" viewBox="0 0 62 39"><path d="M5 1h14l37 38H43z" fill="#a9d0f5" className="blur-[2px]" /></svg></div>
      <svg width="15" height="15" viewBox="0 0 15 15" className="mb-[3px] shrink-0"><path d="M4 6q-2-3 2-3t8-3" stroke="#bbb" fill="none" /><rect x=".500" y="6.500" width="14" height="7.500" fill="#eee" stroke="#999" /><path d="M2 8.500h11M2 10.500h11M4 12.500h7" stroke="#666" strokeDasharray="1.500 .8" /></svg>
      <svg width="16" height="16" viewBox="0 0 16 16" className="mb-[5px] ml-[6px] shrink-0"><circle cx="8" cy="8" r="7.300" fill="#1f38bd" stroke="#b6bcc8" strokeWidth="1.200" /><text x="8" y="12" fontSize="11" fontWeight="bold" textAnchor="middle" fill="#fff" fontFamily="Open Sans, sans-serif">?</text></svg>
      <svg width="9" height="17" viewBox="0 0 9 17" className="mb-[6px] ml-[9px] shrink-0"><path d="M.500 3h5v3h-5zM3 3V1h5v3H5.500" fill="none" stroke="#fff" strokeWidth="1.200" /><path d="M2 13.500h5l-2.500 3z" fill="#fff" /></svg>
      <svg width="16" height="17" viewBox="0 0 16 17" className="mt-[1px] ml-[9px] shrink-0"><ellipse cx="8" cy="11" rx="6.500" ry="5" fill="#111" /><circle cx="8" cy="5.500" r="5" fill="#111" /><ellipse cx="8" cy="12" rx="4" ry="3.500" fill="#fff" /><path d="M2 8q6 3 12 0v2.500q-6 2-8 1v3H4V11l-2-.500z" fill="#ff2fa8" /><circle cx="6.300" cy="5" r="1.300" fill="#fff" /><circle cx="9.700" cy="5" r="1.300" fill="#fff" /><path d="m9 1 5-1v4zM5 7h6l-3 1.500z" fill="#ff5ab0" /><path d="M2 15.500h5v1.500H2zM9 15.500h5v1.500H9z" fill="#f93" /></svg>
      <svg width="17" height="17" viewBox="0 0 17 17" className="mt-[1px] ml-[8px] shrink-0"><circle cx="8.500" cy="8.500" r="8" fill="#f2df28" /><path d="M2 4Q8-2 15 4q-4-1-6 2T2 13q-3-4 0-9z" fill="#6cba2e" /><path d="M7.200 4.500h2.600v2.700h2.700v2.600H9.800v2.700H7.200V9.800H4.500V7.200h2.700z" fill="#14601d" /></svg>
      <svg width="13" height="14" viewBox="0 0 13 14" className="mt-[1px] ml-[10px] shrink-0"><path d="M0 4h3l4-4v14L3 10H0z" fill="#fff" /><path d="M9 4q2 3 0 6M11 2.500q2.500 4.500 0 9" stroke="#cde" fill="none" /></svg>
      <svg width="16" height="16" viewBox="0 0 16 16" className="mt-[1px] ml-[9px] shrink-0"><path d="M1 1v15" stroke="#fff" strokeWidth="1.500" /><path d="M2 1.500q3-1 6 .500t6 0v7q-3 1.500-6 0t-6 0z" fill="#fff" /><circle cx="11" cy="11" r="4.700" fill="#d9261c" stroke="#eee" strokeWidth=".6" /><path d="m9 9 4 4m0-4-4 4" stroke="#fff" strokeWidth="1.500" /></svg>
      <svg width="15" height="15" viewBox="0 0 15 15" className="mt-[1px] ml-[9px] shrink-0" fill="none" stroke="#fff"><path d="M5 3.500h9.500v8H4.500M7 14.500h6M10 11.500v3" strokeWidth="1.300" /><path d="M.800 2v3.500h3.500V2M1.500 0v2M3.500 0v2M2.500 6v8H6" /></svg>
      <div className="ml-[12px] w-[68px] shrink-0 text-center text-[12px] leading-[18px] tracking-[.2px]"><div>16:51</div><div>2019/4/26</div></div>
      <div className="ml-[4px] h-[39px] w-[14px] shrink-0 border border-[#7793b3] bg-[linear-gradient(180deg,#6381a3,#24466f_45%,#173761)]" />
    </div>
  );
}

export default function App() {
  return (
    <div lang="zh-CN" className="flex h-[1050px] w-[1680px] flex-col overflow-hidden font-['Open_Sans','Noto_Sans_CJK_SC',sans-serif] text-[12px] leading-[16px]">
      <div className="shrink-0 bg-[#2b579a]">
        <TitleBar />
        <Tabs />
      </div>
      <div className="flex h-[94px] shrink-0 border-b border-[#d5d5d5] bg-[#f1f1f1]">
        <Clipboard />
        <FontGroup />
        <Paragraph />
        <Styles />
        <Editing />
        <div className="flex flex-1 items-end justify-end pr-[10px] pb-[5px]"><svg width="9" height="6" viewBox="0 0 9 6" fill="none" stroke="#666" strokeWidth="2"><path d="m.8 5.200 3.700-3.700 3.700 3.700" /></svg></div>
      </div>
      <Document />
      <StatusBar />
      <Taskbar />
    </div>
  );
}
